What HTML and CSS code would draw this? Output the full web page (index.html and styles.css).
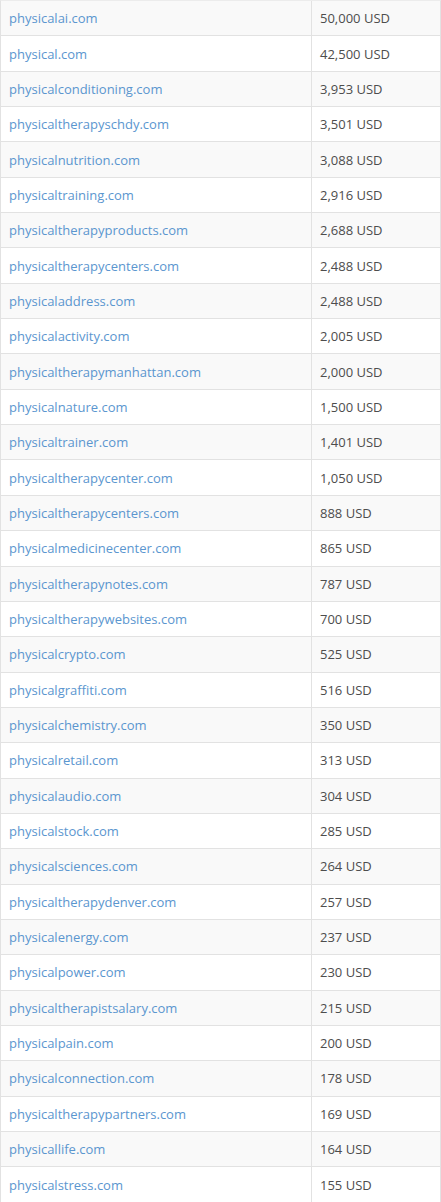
FILE: index.html
```html
<!DOCTYPE html>
<html>
<head>
<meta charset="utf-8">
<link rel="stylesheet" href="styles.css">
</head>
<body>
<div class="table">
  <div class="row"><a class="name" href="#">physicalai.com</a><span class="price">50,000 USD</span></div>
  <div class="row"><a class="name" href="#">physical.com</a><span class="price">42,500 USD</span></div>
  <div class="row"><a class="name" href="#">physicalconditioning.com</a><span class="price">3,953 USD</span></div>
  <div class="row"><a class="name" href="#">physicaltherapyschdy.com</a><span class="price">3,501 USD</span></div>
  <div class="row"><a class="name" href="#">physicalnutrition.com</a><span class="price">3,088 USD</span></div>
  <div class="row"><a class="name" href="#">physicaltraining.com</a><span class="price">2,916 USD</span></div>
  <div class="row"><a class="name" href="#">physicaltherapyproducts.com</a><span class="price">2,688 USD</span></div>
  <div class="row"><a class="name" href="#">physicaltherapycenters.com</a><span class="price">2,488 USD</span></div>
  <div class="row"><a class="name" href="#">physicaladdress.com</a><span class="price">2,488 USD</span></div>
  <div class="row"><a class="name" href="#">physicalactivity.com</a><span class="price">2,005 USD</span></div>
  <div class="row"><a class="name" href="#">physicaltherapymanhattan.com</a><span class="price">2,000 USD</span></div>
  <div class="row"><a class="name" href="#">physicalnature.com</a><span class="price">1,500 USD</span></div>
  <div class="row"><a class="name" href="#">physicaltrainer.com</a><span class="price">1,401 USD</span></div>
  <div class="row"><a class="name" href="#">physicaltherapycenter.com</a><span class="price">1,050 USD</span></div>
  <div class="row"><a class="name" href="#">physicaltherapycenters.com</a><span class="price">888 USD</span></div>
  <div class="row"><a class="name" href="#">physicalmedicinecenter.com</a><span class="price">865 USD</span></div>
  <div class="row"><a class="name" href="#">physicaltherapynotes.com</a><span class="price">787 USD</span></div>
  <div class="row"><a class="name" href="#">physicaltherapywebsites.com</a><span class="price">700 USD</span></div>
  <div class="row"><a class="name" href="#">physicalcrypto.com</a><span class="price">525 USD</span></div>
  <div class="row"><a class="name" href="#">physicalgraffiti.com</a><span class="price">516 USD</span></div>
  <div class="row"><a class="name" href="#">physicalchemistry.com</a><span class="price">350 USD</span></div>
  <div class="row"><a class="name" href="#">physicalretail.com</a><span class="price">313 USD</span></div>
  <div class="row"><a class="name" href="#">physicalaudio.com</a><span class="price">304 USD</span></div>
  <div class="row"><a class="name" href="#">physicalstock.com</a><span class="price">285 USD</span></div>
  <div class="row"><a class="name" href="#">physicalsciences.com</a><span class="price">264 USD</span></div>
  <div class="row"><a class="name" href="#">physicaltherapydenver.com</a><span class="price">257 USD</span></div>
  <div class="row"><a class="name" href="#">physicalenergy.com</a><span class="price">237 USD</span></div>
  <div class="row"><a class="name" href="#">physicalpower.com</a><span class="price">230 USD</span></div>
  <div class="row"><a class="name" href="#">physicaltherapistsalary.com</a><span class="price">215 USD</span></div>
  <div class="row"><a class="name" href="#">physicalpain.com</a><span class="price">200 USD</span></div>
  <div class="row"><a class="name" href="#">physicalconnection.com</a><span class="price">178 USD</span></div>
  <div class="row"><a class="name" href="#">physicaltherapypartners.com</a><span class="price">169 USD</span></div>
  <div class="row"><a class="name" href="#">physicallife.com</a><span class="price">164 USD</span></div>
  <div class="row"><a class="name" href="#">physicalstress.com</a><span class="price">155 USD</span></div>
</div>
</body>
</html>
```
FILE: styles.css
```css
html, body {
  margin: 0;
  padding: 0;
  background: #fff;
}
body {
  font-family: "Open Sans", "DejaVu Sans", sans-serif;
  font-size: 13px;
}
.table {
  display: grid;
  grid-template-columns: 311px 1fr;
  grid-auto-rows: 35.35px;
  border-left: 1px solid #e2e2e2;
  border-right: 1px solid #e2e2e2;
  border-top: 1px solid #ececec;
  width: 441px;
  box-sizing: border-box;
}
.row {
  display: contents;
}
.row > * {
  display: flex;
  align-items: center;
  border-bottom: 1px solid #e2e2e2;
  padding: 0 8px;
  box-sizing: border-box;
}
.row:nth-child(odd) > * {
  background: #f9f9f9;
}
.name {
  color: #5b96cf;
  text-decoration: none;
  border-right: 1px solid #e2e2e2;
}
.price {
  color: #4d4d4d;
}
```
